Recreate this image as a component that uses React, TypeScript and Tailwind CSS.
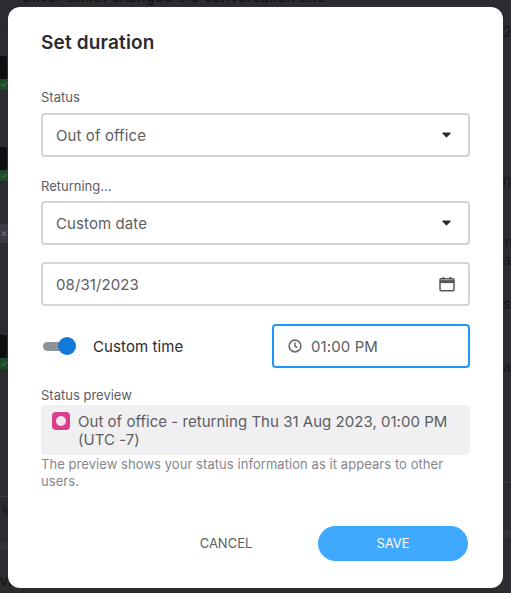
import React from "react";

function Caret() {
  return (
    <svg width="9" height="6" viewBox="0 0 9 6" className="shrink-0">
      <path d="M.8.6h7.4a.5.5 0 0 1 .37.85L4.9 5.2a.6.6 0 0 1-.8 0L.43 1.45A.5.5 0 0 1 .8.6z" fill="#2b2b30" />
    </svg>
  );
}

function Field({ value, right }: { value: string; right: React.ReactNode }) {
  return (
    <div className="h-[44px] rounded-[4px] border-2 border-[#d4d4d4] flex items-center justify-between px-[13px] text-[15px] tracking-[0.1px] text-[#5c5d63]">
      <span className="pt-[2px]">{value}</span>
      {right}
    </div>
  );
}

function Avatar({ top }: { top: string }) {
  return (
    <div className={`${top} flex flex-col`}>
      <div className="w-[7px] h-[23px] rounded-r-[3px] bg-[#0e0e10]" />
      <div className="w-[8px] h-[11px] bg-[#1d4a2a] text-[#4f7f5c] text-[9px] leading-[11px] text-center">✓</div>
    </div>
  );
}

export default function App() {
  return (
    <div className="relative w-[511px] h-[593px] overflow-hidden bg-[#2c2c30] font-['Inter',sans-serif]">
      <div className="-mt-[11px] pl-[21px] text-[15px] leading-[16px] text-[#111] whitespace-nowrap">
        Oliver Smith changed the conversation title
      </div>
      <div className="flex justify-between -mt-[5px]">
        <div className="w-[8px] flex flex-col">
          <div className="mt-[31px] h-px bg-[#26262a]" />
          <Avatar top="mt-[24px]" />
          <Avatar top="mt-[57px]" />
          <div className="mt-[43px] h-[19px] bg-[#3a3a40] text-[#77777d] text-[11px] leading-[19px] text-center">×</div>
          <Avatar top="mt-[92px]" />
          <div className="mt-[127px] h-px bg-[#3b3b40]" />
          <div className="mt-[6px] text-[14px] leading-[16px] text-[#1b1b1e] whitespace-nowrap pl-[2px]">M</div>
          <div className="mt-[23px] h-[8px] bg-[#343438]" />
          <div className="mt-[23px] text-[15px] leading-[16px] text-[#111] whitespace-nowrap">vi</div>
        </div>
        <div className="w-[8px] flex flex-col text-[14px] leading-[16px] text-[#17171a] whitespace-nowrap overflow-hidden">
          <div className="mt-[24px]">2</div>
          <div className="mt-[132px]">n.</div>
          <div className="mt-[46px] pl-[2px]">r</div>
          <div className="mt-[2px]">a</div>
          <div className="mt-[28px]">st</div>
          <div className="mt-[47px]">ar</div>
          <div className="mt-[107px] h-px bg-[#3b3b40]" />
          <div className="mt-[47px] h-[8px] bg-[#343438]" />
        </div>
      </div>
      <div className="absolute left-[8px] top-[7px] w-[495px] h-[581px] bg-white rounded-[12px] px-[33px] pt-[25px] flex flex-col">
        <h1 className="text-[19px] leading-[22px] font-semibold tracking-[0.15px] text-[#2a2b30]">Set duration</h1>
        <label className="mt-[35px] text-[13px] leading-[16px] text-[#5c5d63]">Status</label>
        <div className="mt-[8px]">
          <Field value="Out of office" right={<span className="pr-[4px] flex"><Caret /></span>} />
        </div>
        <label className="mt-[21px] text-[13px] leading-[16px] text-[#5c5d63]">Returning...</label>
        <div className="mt-[7px]">
          <Field value="Custom date" right={<span className="pr-[4px] flex"><Caret /></span>} />
        </div>
        <div className="mt-[17px]">
          <Field
            value="08/31/2023"
            right={
              <svg width="16" height="16" viewBox="0 0 16 16" fill="none" className="shrink-0">
                <rect x="1" y="2.8" width="14" height="12" rx="1.2" stroke="#55565c" strokeWidth="1.5" />
                <path d="M1 5.6h14" stroke="#55565c" strokeWidth="3" />
                <path d="M4.5 1v2.5M11.5 1v2.5" stroke="#55565c" strokeWidth="1.6" />
              </svg>
            }
          />
        </div>
        <div className="mt-[18px] flex items-center h-[44px]">
          <div className="w-[231px] flex items-center">
            <div className="relative ml-[2px] w-[32px] h-[9px] rounded-full bg-[#8f9199] shrink-0">
              <div className="absolute -right-[1px] -top-[4.5px] w-[18px] h-[18px] rounded-full bg-[#1279d9]" />
            </div>
            <span className="ml-[18px] pt-[3px] text-[15px] tracking-[0.1px] text-[#2a2b30]">Custom time</span>
          </div>
          <div className="w-[198px] h-[44px] rounded-[4px] border-2 border-[#1f96fb] flex items-center pl-[14px] text-[15px] tracking-[0.1px] text-[#5c5d63]">
            <svg width="14" height="14" viewBox="0 0 14 14" fill="none" className="shrink-0">
              <circle cx="7" cy="7" r="5.9" stroke="#6b6c73" strokeWidth="1.6" />
              <path d="M7 3.6V7.2l2.4 1.4" stroke="#6b6c73" strokeWidth="1.5" />
            </svg>
            <span className="ml-[9px] pt-[3px]">01:00 PM</span>
          </div>
        </div>
        <label className="mt-[19px] text-[13px] leading-[16px] text-[#5c5d63]">Status preview</label>
        <div className="mt-[2px] h-[50px] rounded-[4px] bg-[#f0f0f2] flex px-[11px] pt-[7px]">
          <div className="w-[18px] h-[18px] rounded-[4px] bg-[#d93f8c] shrink-0 flex items-center justify-center">
            <div className="w-[10px] h-[10px] rounded-full bg-[#f7e4ee]" />
          </div>
          <p className="ml-[8px] pt-[1px] text-[15px] leading-[18px] tracking-[0.03px] text-[#5c5d63]">
            Out of office - returning Thu 31 Aug 2023, 01:00 PM (UTC -7)
          </p>
        </div>
        <p className="mt-[1px] text-[13px] leading-[17px] tracking-[0.06px] text-[#85868e]">
          The preview shows your status information as it appears to other users.
        </p>
        <div className="mt-[36px] flex items-center">
          <span className="ml-[158px] w-[54px] text-center text-[13px] text-[#5c5d63]">CANCEL</span>
          <button className="ml-[65px] w-[150px] h-[35px] rounded-full bg-[#3fa9ff] text-white text-[13px]">
            SAVE
          </button>
        </div>
      </div>
    </div>
  );
}
